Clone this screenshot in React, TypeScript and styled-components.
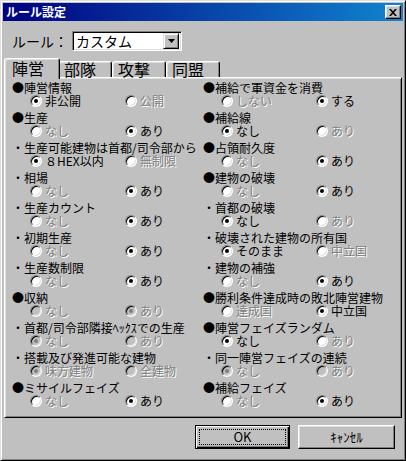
import React from "react";
import styled, { createGlobalStyle, css } from "styled-components";

const GlobalStyle = createGlobalStyle`
  html, body { margin: 0; padding: 0; background: #c0c0c0; }
  body { font-family: "Noto Sans CJK JP", "Noto Sans", sans-serif; }
  * { box-sizing: border-box; }
`;

const Window = styled.div`
  width: 406px;
  height: 461px;
  background: #c0c0c0;
  border: 1px solid;
  border-color: #dfdfdf #000 #000 #dfdfdf;
  box-shadow: inset 1px 1px #fff, inset -1px -1px #808080;
  padding: 2px;
  display: flex;
  flex-direction: column;
`;

const TitleBar = styled.div`
  height: 18px;
  flex: none;
  background: linear-gradient(90deg, #000080, #1084d0);
  display: flex;
  align-items: center;
  justify-content: space-between;
  padding: 0 2px 0 3px;
`;

const TitleText = styled.span`
  color: #fff;
  font-size: 12px;
  font-weight: 700;
  line-height: 18px;
`;

const CloseButton = styled.div`
  width: 16px;
  height: 14px;
  background: #c0c0c0;
  border: 1px solid;
  border-color: #fff #000 #000 #fff;
  box-shadow: inset -1px -1px #808080, inset 1px 1px #dfdfdf;
  display: flex;
  align-items: center;
  justify-content: center;
`;

const RuleRow = styled.div`
  margin-top: 10px;
  height: 20px;
  padding-left: 9px;
  display: flex;
  align-items: center;
  flex: none;
`;

const RuleLabel = styled.span`
  width: 60px;
  font-size: 14px;
  line-height: 20px;
  color: #000;
`;

const Combo = styled.div`
  width: 110px;
  height: 20px;
  background: #fff;
  border: 1px solid;
  border-color: #808080 #fff #fff #808080;
  box-shadow: inset 1px 1px #000, inset -1px -1px #dfdfdf;
  padding: 2px 2px 2px 3px;
  display: flex;
  align-items: center;
  justify-content: space-between;
`;

const ComboText = styled.span`
  font-size: 14px;
  line-height: 16px;
  color: #000;
`;

const ComboButton = styled.div`
  width: 16px;
  height: 16px;
  background: #c0c0c0;
  border: 1px solid;
  border-color: #dfdfdf #000 #000 #dfdfdf;
  box-shadow: inset 1px 1px #fff, inset -1px -1px #808080;
  display: flex;
  align-items: center;
  justify-content: center;
`;

const Body = styled.div`
  margin: 7px 1px 0;
  display: flex;
  flex-direction: column;
`;

const TabRow = styled.div`
  height: 19px;
  padding-left: 2px;
  display: flex;
  align-items: flex-end;
`;

const Tab = styled.div<{ $w: number; $active?: boolean }>`
  position: relative;
  width: ${(p) => p.$w}px;
  height: 16px;
  font-size: 16px;
  line-height: 15px;
  padding-left: 5px;
  color: #000;
  background: #c0c0c0;
  border-top: 1px solid #fff;
  border-left: 1px solid #fff;
  border-right: 1px solid #000;
  border-radius: 3px 3px 0 0;
  box-shadow: inset 1px 1px #dfdfdf, inset -1px 0 #808080;
  white-space: nowrap;
  ${(p) =>
    p.$active &&
    css`
      width: ${p.$w + 4}px;
      height: 21px;
      margin: 0 -2px -2px;
      z-index: 1;
      padding-left: 7px;
      line-height: 19px;
    `}
`;

const Panel = styled.div`
  height: 341px;
  border: 1px solid;
  border-color: #fff #000 #000 #fff;
  box-shadow: inset 1px 1px #dfdfdf, inset -1px -1px #808080;
  padding: 3px 0 0 7px;
  display: flex;
`;

const Column = styled.div`
  width: 191px;
  display: flex;
  flex-direction: column;
`;

const Item = styled.div`
  height: 30px;
`;

const ItemLabel = styled.div`
  height: 14px;
  font-size: 12px;
  line-height: 14px;
  color: #000;
  white-space: nowrap;
`;

const RadioRow = styled.div`
  height: 16px;
  padding-left: 18px;
  display: grid;
  grid-template-columns: 95px auto;
  align-items: start;
`;

const Option = styled.div<{ $disabled?: boolean }>`
  display: flex;
  align-items: center;
  gap: 3px;
  height: 12px;
  font-size: 12px;
  line-height: 12px;
  white-space: nowrap;
  color: ${(p) => (p.$disabled ? "#808080" : "#000")};
  text-shadow: ${(p) => (p.$disabled ? "1px 1px 0 #fff" : "none")};
`;

const RadioCircle = styled.span<{ $checked?: boolean; $disabled?: boolean; $grayFill?: boolean }>`
  width: 12px;
  height: 12px;
  flex: none;
  border-radius: 50%;
  background: ${(p) => (p.$grayFill ? "#c0c0c0" : "#fff")};
  border: 1px solid;
  border-color: #808080 #fff #fff #808080;
  box-shadow: inset 1px 1px #000, inset -1px -1px #dfdfdf;
  display: flex;
  align-items: center;
  justify-content: center;
  &::after {
    content: "";
    display: ${(p) => (p.$checked ? "block" : "none")};
    width: 4px;
    height: 4px;
    border-radius: 50%;
    background: ${(p) => (p.$disabled ? "#808080" : "#000")};
  }
`;

const ButtonRow = styled.div`
  margin-top: 7px;
  padding-right: 8px;
  display: flex;
  justify-content: flex-end;
  gap: 8px;
`;

const Button = styled.div<{ $w: number; $default?: boolean }>`
  position: relative;
  width: ${(p) => p.$w}px;
  height: 24px;
  font-size: 13px;
  line-height: 22px;
  text-align: center;
  color: #000;
  background: #c0c0c0;
  border: 1px solid;
  border-color: #fff #000 #000 #fff;
  box-shadow: inset -1px -1px #808080, inset 1px 1px #dfdfdf;
  ${(p) =>
    p.$default &&
    css`
      border-color: #000;
      box-shadow: inset 1px 1px #fff, inset -1px -1px #000, inset -2px -2px #808080;
      &::after {
        content: "";
        position: absolute;
        inset: 3px;
        border: 1px dotted #000;
      }
    `}
`;

type St = "on" | "off" | "don";
type Opt = { label: string; st: St };
type Entry = { mark: string; title: string; opts: [Opt, Opt] };

const o = (label: string, st: St): Opt => ({ label, st });

const left: Entry[] = [
  { mark: "●", title: "陣営情報", opts: [o("非公開", "on"), o("公開", "off")] },
  { mark: "●", title: "生産", opts: [o("なし", "off"), o("あり", "on")] },
  { mark: "・", title: "生産可能建物は首都/司令部から", opts: [o("８HEX以内", "on"), o("無制限", "off")] },
  { mark: "・", title: "相場", opts: [o("なし", "off"), o("あり", "on")] },
  { mark: "・", title: "生産カウント", opts: [o("なし", "off"), o("あり", "on")] },
  { mark: "・", title: "初期生産", opts: [o("なし", "off"), o("あり", "on")] },
  { mark: "・", title: "生産数制限", opts: [o("なし", "off"), o("あり", "on")] },
  { mark: "●", title: "収納", opts: [o("なし", "off"), o("あり", "don")] },
  { mark: "・", title: "首都/司令部隣接ﾍｯｸｽでの生産", opts: [o("なし", "don"), o("あり", "off")] },
  { mark: "・", title: "搭載及び発進可能な建物", opts: [o("味方建物", "don"), o("全建物", "off")] },
  { mark: "●", title: "ミサイルフェイズ", opts: [o("なし", "off"), o("あり", "on")] },
];

const right: Entry[] = [
  { mark: "●", title: "補給で軍資金を消費", opts: [o("しない", "off"), o("する", "on")] },
  { mark: "●", title: "補給線", opts: [o("なし", "on"), o("あり", "off")] },
  { mark: "●", title: "占領耐久度", opts: [o("なし", "off"), o("あり", "on")] },
  { mark: "●", title: "建物の破壊", opts: [o("なし", "off"), o("あり", "on")] },
  { mark: "・", title: "首都の破壊", opts: [o("なし", "on"), o("あり", "off")] },
  { mark: "・", title: "破壊された建物の所有国", opts: [o("そのまま", "on"), o("中立国", "off")] },
  { mark: "・", title: "建物の補強", opts: [o("なし", "off"), o("あり", "on")] },
  { mark: "●", title: "勝利条件達成時の敗北陣営建物", opts: [o("達成国", "off"), o("中立国", "on")] },
  { mark: "●", title: "陣営フェイズランダム", opts: [o("なし", "on"), o("あり", "off")] },
  { mark: "・", title: "同一陣営フェイズの連続", opts: [o("なし", "don"), o("あり", "off")] },
  { mark: "●", title: "補給フェイズ", opts: [o("なし", "off"), o("あり", "on")] },
];

const Radio = ({ opt, rowDisabled }: { opt: Opt; rowDisabled: boolean }) => {
  const disabled = opt.st === "off" || opt.st === "don";
  const checked = opt.st === "on" || opt.st === "don";
  return (
    <Option $disabled={disabled}>
      <RadioCircle $checked={checked} $disabled={disabled} $grayFill={rowDisabled} />
      <span>{opt.label}</span>
    </Option>
  );
};

const RuleColumn = ({ items }: { items: Entry[] }) => (
  <Column>
    {items.map((it, i) => {
      const rowDisabled = it.opts.some((x) => x.st === "don");
      return (
        <Item key={i}>
          <ItemLabel>
            {it.mark}
            {it.title}
          </ItemLabel>
          <RadioRow>
            <Radio opt={it.opts[0]} rowDisabled={rowDisabled} />
            <Radio opt={it.opts[1]} rowDisabled={rowDisabled} />
          </RadioRow>
        </Item>
      );
    })}
  </Column>
);

const tabs = [
  { label: "陣営", w: 52 },
  { label: "部隊", w: 54 },
  { label: "攻撃", w: 54 },
  { label: "同盟", w: 54 },
];

export default function App() {
  return (
    <>
      <GlobalStyle />
      <Window>
        <TitleBar>
          <TitleText>ルール設定</TitleText>
          <CloseButton>
            <svg width="8" height="7" viewBox="0 0 8 7">
              <path d="M0 0h2l2 2.2L6 0h2L5 3.5 8 7H6L4 4.8 2 7H0l3-3.5z" fill="#000" />
            </svg>
          </CloseButton>
        </TitleBar>
        <RuleRow>
          <RuleLabel>ルール：</RuleLabel>
          <Combo>
            <ComboText>カスタム</ComboText>
            <ComboButton>
              <svg width="7" height="4" viewBox="0 0 7 4">
                <path d="M0 0h7L3.5 4z" fill="#000" />
              </svg>
            </ComboButton>
          </Combo>
        </RuleRow>
        <Body>
          <TabRow>
            {tabs.map((t, i) => (
              <Tab key={t.label} $w={t.w} $active={i === 0}>
                {t.label}
              </Tab>
            ))}
          </TabRow>
          <Panel>
            <RuleColumn items={left} />
            <RuleColumn items={right} />
          </Panel>
        </Body>
        <ButtonRow>
          <Button $w={95} $default>
            OK
          </Button>
          <Button $w={97}>ｷｬﾝｾﾙ</Button>
        </ButtonRow>
      </Window>
    </>
  );
}
